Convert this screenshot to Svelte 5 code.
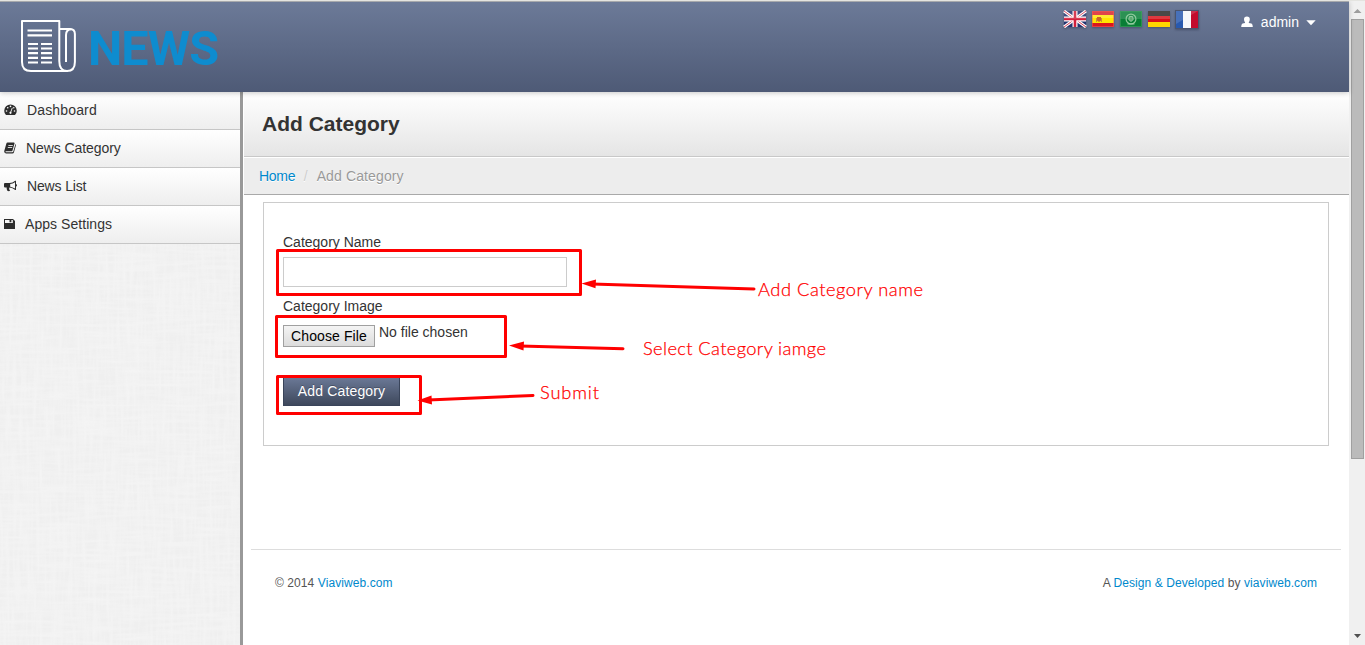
<script>
  const menu = [
    { label: 'Dashboard', icon: 'dash', w: 13, len: .15 },
    { label: 'News Category', icon: 'book', w: 12, len: -.08 },
    { label: 'News List', icon: 'horn', w: 13, len: -.15 },
    { label: 'Apps Settings', icon: 'save', w: 11, len: .05 }
  ];
  const rows = [44, 48.5, 53.2, 57.8, 62.5];
</script>

<div class="page">
  <div class="main">
    <header>
      <div class="brand">
        <svg class="logo" width="60" height="60" viewBox="18 16 60 60" fill="none" stroke="#fff" stroke-width="2">
          <path d="M22 21H59.3V61Q59.3 71 67 71H31Q22 71 22 62Z" stroke-linejoin="round" />
          <path d="M59.5 29H70Q74.9 29.2 74.9 34V62Q74.9 71 67 71" />
          <path d="M71.5 29.2Q66 29.2 66 35V62" />
          <path d="M27.5 30.5H52M27.5 35.3H52" stroke-width="2.2" />
          {#each rows as y}
            <path d="M28 {y}H38M41 {y}H52" stroke-width="2.2" />
          {/each}
        </svg>
        <span class="name">NEWS</span>
      </div>
      <div class="flags">
        <svg width="24" height="18" viewBox="0 0 24 18">
          <rect x="1" y="1" width="22" height="16" fill="#24336f" />
          <path d="M1 1L23 17M23 1L1 17" stroke="#fff" stroke-width="3" />
          <path d="M1 1L23 17M23 1L1 17" stroke="#d22841" stroke-width=".9" />
          <path d="M12 1V17M1 9H23" stroke="#fff" stroke-width="5" />
          <path d="M12 1V17M1 9H23" stroke="#d21f3c" stroke-width="2.6" />
          <rect x="1" y="1" width="22" height="8" fill="#fff" opacity=".13" />
        </svg>
        <svg width="24" height="18" viewBox="0 0 24 18">
          <rect x="1" y="1" width="22" height="16" fill="#d9171d" />
          <rect x="1" y="5" width="22" height="8" fill="#ffe600" />
          <rect x="1" y="1" width="22" height="7" fill="#fff" opacity=".2" />
          <path d="M6 7H10V10.5L8 12L6 10.5Z" fill="#c8642b" /><path d="M5.5 8V12M10.5 8V12" stroke="#c59334" />
          <rect x="1.5" y="1.5" width="21" height="15" fill="none" stroke="#f15a5a" stroke-opacity=".55" />
        </svg>
        <svg width="24" height="18" viewBox="0 0 24 18">
          <rect x="1" y="1" width="22" height="16" fill="#087e35" />
          <rect x="1" y="1" width="22" height="8" fill="#fff" opacity=".15" />
          <circle cx="12" cy="9" r="4.9" fill="none" stroke="#8fca9c" stroke-width="1.2" />
          <path d="M10.5 6.5H13.5L14.3 9.5L12 11.5L9.7 9.5ZM8.5 14H15.5" fill="#5faa73" stroke="#a5d4ae" stroke-width=".8" />
          <rect x="1.5" y="1.5" width="21" height="15" fill="none" stroke="#4aa667" stroke-opacity=".5" />
        </svg>
        <svg width="24" height="18" viewBox="0 0 24 18">
          <path fill="#24211f" d="M1 1H23V6H1Z" /><path fill="#d80f17" d="M1 6H23V12H1Z" /><path fill="#ffd500" d="M1 12H23V17H1Z" />
          <rect x="1" y="1" width="22" height="8" fill="#fff" opacity=".18" />
        </svg>
        <svg width="24" height="20" viewBox="0 0 24 20">
          <rect x=".5" y=".5" width="23" height="18" fill="#fff" stroke="#4a546e" />
          <path fill="#2859ae" d="M1 1H8V18H1Z" /><path fill="#f5f7fa" d="M8 1H16V18H8Z" /><path fill="#c30b2d" d="M16 1H23V18H16Z" />
          <path d="M1 1H23L1 14Z" fill="#fff" opacity=".15" />
        </svg>
      </div>
      <div class="user">
        <svg width="12" height="12" viewBox="0 0 12 12" fill="#fff"><path d="M3 3.2Q3 .4 5.9 .4T8.8 3.2Q8.8 5.2 7.8 6.2V6.9L10.5 7.4Q11.8 7.9 11.8 11H.2Q.2 7.9 1.5 7.4L4 6.9V6.2Q3 5.2 3 3.2Z" /></svg>
        <span>admin</span>
        <svg width="10" height="6" viewBox="0 0 10 6"><path d="M.3 .3H9.7L5 5.3Z" fill="#fff" /></svg>
      </div>
    </header>

    <div class="body">
      <aside>
        <nav>
          {#each menu as m}
            <a style:letter-spacing="{m.len}px">
              <svg width={m.w} height="14" viewBox="0 0 {m.w} 14" fill="#2d2d2d">
                {#if m.icon === 'dash'}
                  <path d="M2 12Q.2 10.3 .2 7.7A6.3 6.2 0 0 1 12.8 7.7Q12.8 10.3 11 12Z" />
                  <g fill="#fff"><circle cx="2.5" cy="8" r=".8" /><circle cx="3.7" cy="4.8" r=".8" /><circle cx="6.5" cy="3.4" r=".8" /><circle cx="10.5" cy="8" r=".8" /><circle cx="9.8" cy="4.8" r=".7" /></g>
                  <path d="M8.3 4.8L6.8 9" stroke="#fff" stroke-width=".9" /><circle cx="6.5" cy="9.8" r="1.1" fill="#fff" />
                {:else if m.icon === 'book'}
                  <path d="M3.6 1.5H10Q10.8 1.5 10.5 2.4L8.5 9.4Q8.2 10.3 7.3 10.3H2.2Q1.4 10.3 1.4 10.8T2.2 11.3H8.2Q9 11.3 9.3 10.5L11.2 4V3Q12.2 3.5 11.8 4.8L9.9 11.4Q9.6 12.4 8.4 12.4H2Q0 12.2 .2 10.2L2.3 2.8Q2.6 1.5 3.6 1.5Z" />
                  <path d="M4.4 4.5H8.8M3.8 6.5H8.2" stroke="#fff" stroke-width=".8" />
                {:else if m.icon === 'horn'}
                  <path fill-rule="evenodd" d="M0 5Q0 4.1 1 4.1H5.5Q8.6 4 11.2 1.7H12V5Q13 5.2 13 6.3T12 7.6V11H11.2Q8.8 8.8 5.5 8.5Q4.7 9.1 5.4 10Q4.8 10.6 6.2 11.8Q4.8 12.7 3.3 11.8Q2.4 9.7 2.7 8.5H1Q0 8.5 0 7.6ZM6.2 5V7.7Q8.8 8 11 9.6V3.2Q8.8 4.8 6.2 5Z" />
                {:else}
                  <path fill-rule="evenodd" d="M0 2H9L11 4V12H0ZM1 3V6H8.8V3H7.4V5.2H5.5V3Z" />
                {/if}
              </svg>
              <span>{m.label}</span>
            </a>
          {/each}
        </nav>
        <svg class="texture" preserveAspectRatio="none">
          <filter id="warp" x="0" y="0" width="100%" height="100%">
            <feTurbulence type="fractalNoise" baseFrequency=".3 .025" numOctaves="2" seed="4" />
            <feColorMatrix values="0 0 0 0 1  0 0 0 0 1  0 0 0 0 1  2 0 0 0 -.7" />
          </filter>
          <filter id="weft" x="0" y="0" width="100%" height="100%">
            <feTurbulence type="fractalNoise" baseFrequency=".025 .3" numOctaves="2" seed="9" />
            <feColorMatrix values="0 0 0 0 1  0 0 0 0 1  0 0 0 0 1  2 0 0 0 -.7" />
          </filter>
          <rect width="100%" height="100%" filter="url(#warp)" />
          <rect width="100%" height="100%" filter="url(#weft)" />
        </svg>
      </aside>

      <main>
        <h1>Add Category</h1>
        <div class="crumbs"><a>Home</a><i>/</i><span>Add Category</span></div>
        <section>
          <label for="category">Category Name</label>
          <input id="category" type="text" />
          <span class="label">Category Image</span>
          <div class="file"><button class="choose">Choose File</button><span>No file chosen</span></div>
          <button class="submit">Add Category</button>
        </section>
        <footer>
          <span>© 2014 <a>Viaviweb.com</a></span>
          <span class="credit">A <a>Design &amp; Developed</a> by <a>viaviweb.com</a></span>
        </footer>
      </main>
    </div>
  </div>

  <div class="scroll">
    <svg width="16" height="17" viewBox="0 0 16 17"><path d="M4.5 12L8.5 8L12.5 12Z" fill="#9d9d9d" /></svg>
    <div class="thumb"></div>
    <svg class="down" width="16" height="17" viewBox="0 0 16 17"><path d="M5 6H12L8.5 10Z" fill="#505050" /></svg>
  </div>

  <svg class="notes" width="1365" height="645">
    <g fill="none" stroke="#f00" stroke-width="3" stroke-linejoin="round">
      <rect x="277.5" y="250.5" width="303" height="44" />
      <rect x="276.5" y="316.5" width="229" height="40" />
      <rect x="277.5" y="376.5" width="143" height="37" />
      <g stroke-linecap="round"><path d="M592 284L754 289M520 346L623 348.8M428 400L533 395.5" /></g>
    </g>
    <path fill="#f00" d="M581.5 283.5L596 279.5L595.5 288.3ZM509 345.5L524 341.5L523.5 350.5ZM417.5 400.5L431.5 395.5L432 404.5Z" />
    <g class="hand" fill="#f00">
      <text x="758" y="296" textLength="165">Add Category name</text>
      <text x="643" y="355" textLength="183">Select Category iamge</text>
      <text x="540" y="399" textLength="59">Submit</text>
    </g>
  </svg>
</div>

<style>
  :global(body) { margin: 0; overflow: hidden; }
  * { box-sizing: border-box; }
  .page { position: relative; display: flex; width: 1365px; height: 645px; background: #fff; color: #333; font: 14px/20px "Liberation Sans", Arial, sans-serif; border-top: 1px solid #e4e4e0; overflow: hidden; }
  .main { width: 1349px; display: flex; flex-direction: column; }
  header { position: relative; z-index: 1; height: 91px; flex: none; display: flex; align-items: flex-start; border-top: 1px solid #a7a9ac; background: linear-gradient(#6c7a98, #4e5a76); box-shadow: 0 1px 5px rgba(0, 0, 0, .22); }
  .brand { display: flex; flex: 1; padding: 14px 0 0 18px; }
  .name { margin-left: 10px; color: #0e8ccf; font: bold 48.5px/60px Roboto, sans-serif; letter-spacing: -.9px; padding-top: 3px; }
  .flags { display: flex; gap: 4px; padding-top: 8px; margin-right: 42px; }
  .flags svg { filter: drop-shadow(0 1px 1px rgba(20, 25, 45, .35)); }
  .user { display: flex; align-items: center; color: #fff; padding-top: 10px; margin-right: 33px; }
  .user span { margin: 0 7px 0 8px; }
  .user svg:last-child { margin-top: 2px; }
  .body { flex: 1; display: flex; }
  aside { width: 243px; border-right: 3px solid #999; display: flex; flex-direction: column; background: #efefef; }
  nav a { height: 38px; display: flex; align-items: center; gap: 10px; padding: 0 0 1px 4px; border-bottom: 1px solid #c6c6c6; background: linear-gradient(#fff, #eee); }
  nav svg { margin-top: -1px; }
  .texture { width: 240px; flex: 1; display: block; opacity: .3; }
  main { flex: 1; margin-left: 1px; display: flex; flex-direction: column; }
  h1 { margin: 0; height: 65px; padding: 12px 18px; font-size: 21px; line-height: 40px; background: linear-gradient(#fff, #e5e5e5); border-bottom: 1px solid #c8c8c8; }
  .crumbs { height: 38px; padding: 8px 15px; background: #ededed; border-top: 1px solid #fff; border-bottom: 1px solid #a9a9a9; color: #999; text-shadow: 0 1px 0 #fff; }
  .crumbs a { letter-spacing: -.3px; }
  .crumbs i { font-style: normal; color: #ccc; margin: 0 9px 0 8.6px; }
  .crumbs span { letter-spacing: .12px; }
  a { color: #08c; }
  nav a { color: #333; }
  section { margin: 7px 20px 0 19px; height: 244px; border: 1px solid #ccc; padding: 29px 19px; display: flex; flex-direction: column; align-items: flex-start; }
  input { width: 284px; height: 30px; margin: 5px 0 9px; border: 1px solid #ccc; background: #fff; padding: 4px 6px; }
  .file { height: 30px; display: flex; gap: 4px; margin-top: 6px; }
  .file span { line-height: 20px; }
  .choose { width: 92px; height: 22px; margin-top: 3px; padding: 0; border: 1px solid #a0a0a0; background: linear-gradient(#f4f4f4, #dcdcdc); font: 14px/20px "Liberation Sans", Arial, sans-serif; letter-spacing: .1px; color: #000; white-space: nowrap; }
  .submit { width: 117px; height: 30px; margin-top: 24px; padding: 0; border: 1px solid #39445a; background: linear-gradient(#6c7a98, #3e485c); color: #fff; font: 14px/20px "Liberation Sans", Arial, sans-serif; letter-spacing: .16px; text-shadow: 0 -1px 0 rgba(0, 0, 0, .25); }
  footer { margin: 103px 8px 0 7px; border-top: 1px solid #ddd; padding: 23px 24px; display: flex; justify-content: space-between; font-size: 12px; color: #555; letter-spacing: .08px; }
  .scroll { width: 16px; background: #f0f0f0; display: flex; flex-direction: column; }
  .thumb { height: 441px; margin: 1px 1px 0 2px; background: #bbb; border: 1px solid #a0a0a0; flex: none; height: 440px; }
  .down { margin-top: auto; }
  .notes { position: absolute; left: 0; top: -1px; pointer-events: none; }
  .hand { font: 300 18.3px Lato, sans-serif; stroke: #f00; stroke-width: .25px; }
</style>
